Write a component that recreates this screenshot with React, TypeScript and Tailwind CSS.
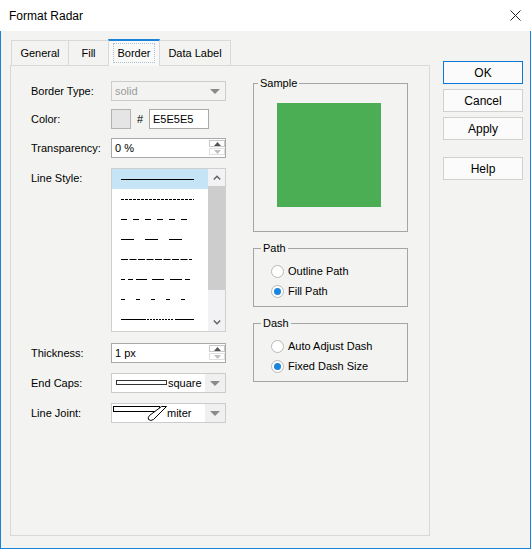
import React from "react";

const FONT = { fontFamily: '"Liberation Sans", Arial, sans-serif' };

function DownTri({ color = "#8a8a8a" }: { color?: string }) {
  return (
    <svg width="10" height="5" viewBox="0 0 10 5">
      <path d="M0 0H10L5 5Z" fill={color} />
    </svg>
  );
}

function Select({ children, disabled }: { children: React.ReactNode; disabled?: boolean }) {
  return (
    <div
      className={
        disabled
          ? "h-[20px] w-[115px] border border-[#cccccc] flex items-center text-[#9a9a9a]"
          : "h-[20px] w-[115px] border border-[#cccccc] bg-white flex items-center"
      }
    >
      <div className="flex-1 flex items-center h-full overflow-hidden">{children}</div>
      <div
        className={
          disabled
            ? "w-[20px] h-full flex items-center justify-center"
            : "w-[20px] h-full flex items-center justify-center bg-[#f0f0f0]"
        }
      >
        <DownTri />
      </div>
    </div>
  );
}

function Spinner() {
  return (
    <div className="flex flex-col w-[16px] gap-[1px] mt-[1px]">
      <div className="h-[7px] border border-[#c8c8c8] flex items-center justify-center">
        <svg width="7" height="4" viewBox="0 0 7 4">
          <path d="M0 4H7L3.5 0Z" fill="#555555" />
        </svg>
      </div>
      <div className="h-[7px] border border-[#e0e0e0] flex items-center justify-center">
        <svg width="7" height="4" viewBox="0 0 7 4">
          <path d="M0 0H7L3.5 4Z" fill="#c0c0c0" />
        </svg>
      </div>
    </div>
  );
}

function SpinInput({ value }: { value: string }) {
  return (
    <div className="h-[20px] w-[115px] border border-[#a9a9a9] bg-white flex items-start">
      <div className="flex-1 pl-[3px] leading-[18px]">{value}</div>
      <Spinner />
    </div>
  );
}

function Row({ label, children }: { label: string; children: React.ReactNode }) {
  return (
    <div className="flex items-center h-[20px]">
      <div className="w-[80px]">{label}</div>
      {children}
    </div>
  );
}

function Radio({ checked, label }: { checked?: boolean; label: string }) {
  return (
    <div className="flex items-center h-[20px]">
      <span className="w-[13px] h-[13px] rounded-full border border-[#b9b9b9] bg-white flex items-center justify-center">
        {checked && <span className="w-[7px] h-[7px] rounded-full bg-[#1a85dc]" />}
      </span>
      <span className="ml-[4px]">{label}</span>
    </div>
  );
}

function dashSegs(pattern: number[], start: number, end: number): [number, number][] {
  const segs: [number, number][] = [];
  let x = start;
  let i = 0;
  while (x < end) {
    const len = pattern[i % pattern.length];
    if (i % 2 === 0) segs.push([x, Math.min(x + len, end)]);
    x += len;
    i++;
  }
  return segs;
}

const lineStyles: [number, number][][] = [
  [[0, 73]],
  dashSegs([3, 1], 0, 73),
  dashSegs([6, 6], 0, 67),
  dashSegs([13, 11], 0, 61),
  dashSegs([7, 1.5], 0, 71),
  [
    [0, 4],
    [7, 12],
    [15, 26],
    [31, 43],
    [49, 61],
    [64, 69],
  ],
  dashSegs([4, 11], 0, 64),
  [[0, 25], ...dashSegs([2, 1], 26, 53), [54, 73]],
];

function LineSample({ segs }: { segs: [number, number][] }) {
  const d = segs.map(([s, e]) => `M${s} 0.5H${e}`).join("");
  return (
    <svg width="74" height="1" viewBox="0 0 74 1" className="block">
      <path d={d} stroke="#000" strokeWidth="1" fill="none" />
    </svg>
  );
}

function LineList() {
  return (
    <div className="w-[115px] h-[164px] border border-[#d0d0d0] bg-white flex">
      <div className="flex-1 flex flex-col">
        {lineStyles.map((segs, i) => (
          <div
            key={i}
            className={
              i === 0
                ? "h-[20px] flex items-center pl-[9px] bg-[#c5e5f6]"
                : "h-[20px] flex items-center pl-[9px]"
            }
          >
            <LineSample segs={segs} />
          </div>
        ))}
      </div>
      <div className="w-[17px] bg-[#f2f1f3] flex flex-col">
        <div className="h-[17px] flex items-center justify-center">
          <svg width="8" height="5" viewBox="0 0 8 5">
            <path d="M0.8 4.5L4 1.2L7.2 4.5" stroke="#606060" strokeWidth="1.4" fill="none" />
          </svg>
        </div>
        <div className="h-[104px] bg-[#cdcdcd]" />
        <div className="flex-1" />
        <div className="h-[17px] flex items-center justify-center">
          <svg width="8" height="5" viewBox="0 0 8 5">
            <path d="M0.8 0.5L4 3.8L7.2 0.5" stroke="#606060" strokeWidth="1.4" fill="none" />
          </svg>
        </div>
      </div>
    </div>
  );
}

function Button({ label, primary }: { label: string; primary?: boolean }) {
  return (
    <div
      className={
        primary
          ? "h-[23px] w-[80px] border border-[#0a78d7] bg-[#fbfbfb] flex items-center justify-center text-[12px]"
          : "h-[23px] w-[80px] border border-[#d0d0d0] bg-[#fbfbfb] flex items-center justify-center text-[12px]"
      }
    >
      {label}
    </div>
  );
}

export default function App() {
  return (
    <div className="w-[531px] h-[549px] flex flex-col bg-[#f3f4f1] text-[11px] text-black" style={FONT}>
      <div className="h-[31px] bg-white flex items-center justify-between pl-[9px] pr-[10px]">
        <span className="text-[12px]">Format Radar</span>
        <svg width="11" height="11" viewBox="0 0 11 11">
          <path d="M0.5 0.5L10.5 10.5M10.5 0.5L0.5 10.5" stroke="#222" strokeWidth="1" />
        </svg>
      </div>
      <div className="flex-1 flex border-x border-b border-[#1883d7]">
        <div className="ml-[9px] mt-[8px] w-[420px] flex flex-col">
          <div className="h-[26px] flex items-end pl-[1px]">
            <div className="h-[25px] w-[57px] border-l border-t border-[#d9d9d9] flex items-center justify-center">
              General
            </div>
            <div className="h-[25px] w-[40px] border-l border-t border-[#d9d9d9] flex items-center justify-center">
              Fill
            </div>
            <div className="relative z-10 h-[27px] w-[52px] -mb-[1px] border-x border-[#d9d9d9] border-t-2 border-t-[#1883d7] bg-[#f9faf8] flex items-start justify-center pt-[2px]">
              <span className="h-[20px] px-[3px] border border-dotted border-[#a9c2da] flex items-center">Border</span>
            </div>
            <div className="h-[25px] w-[71px] border-r border-t border-[#d9d9d9] flex items-center justify-center">
              Data Label
            </div>
          </div>
          <div className="h-[471px] border border-[#d9d9d9] flex">
            <div className="flex flex-col pt-[15px] pl-[20px]">
              <Row label="Border Type:">
                <Select disabled>
                  <span className="pl-[3px]">solid</span>
                </Select>
              </Row>
              <div className="mt-[8px]">
                <Row label="Color:">
                  <div className="w-[20px] h-[20px] border border-[#b3b3b3] bg-[#e5e5e5]" />
                  <span className="w-[18px] text-center">#</span>
                  <div className="w-[60px] h-[20px] border border-[#a9a9a9] bg-white pl-[3px] leading-[18px]">
                    E5E5E5
                  </div>
                </Row>
              </div>
              <div className="mt-[9px]">
                <Row label="Transparency:">
                  <SpinInput value="0 %" />
                </Row>
              </div>
              <div className="mt-[10px] flex items-start">
                <div className="w-[80px] pt-[3px] leading-[14px]">Line Style:</div>
                <LineList />
              </div>
              <div className="mt-[11px]">
                <Row label="Thickness:">
                  <SpinInput value="1 px" />
                </Row>
              </div>
              <div className="mt-[10px]">
                <Row label="End Caps:">
                  <Select>
                    <svg width="55" height="6" viewBox="0 0 55 6" className="ml-[4px] shrink-0">
                      <rect x="0.5" y="0.5" width="50" height="4" fill="white" stroke="#333" strokeWidth="1" />
                    </svg>
                    <span className="-ml-[3px]">square</span>
                  </Select>
                </Row>
              </div>
              <div className="mt-[10px]">
                <Row label="Line Joint:">
                  <Select>
                    <svg width="54" height="18" viewBox="0 0 54 18" className="ml-[1px] shrink-0">
                      <rect x="0.5" y="2.5" width="46" height="5" fill="white" stroke="#000" strokeWidth="1" />
                      <path
                        d="M36.5 11.5L48.5 2.5L53.5 2.5L40.5 15.5Q37.5 17.5 35.5 15.5Q34.5 13.5 36.5 11.5Z"
                        fill="white"
                        stroke="#000"
                        strokeWidth="1"
                      />
                    </svg>
                    <span>miter</span>
                  </Select>
                </Row>
              </div>
            </div>
            <div className="ml-[27px] mt-[9px] w-[155px] flex flex-col">
              <fieldset className="border border-[#a5a5a5]">
                <legend className="ml-[4px] px-[2px] leading-[16px]">Sample</legend>
                <div className="mt-[12px] ml-[23px] mb-[24px] w-[104px] h-[104px] bg-[#4bae55]" />
              </fieldset>
              <fieldset className="mt-[8px] border border-[#a5a5a5] pl-[17px] pb-[5px]">
                <legend className="-ml-[10px] px-[2px] leading-[16px]">Path</legend>
                <div className="mt-[5px] flex flex-col">
                  <Radio label="Outline Path" />
                  <Radio label="Fill Path" checked />
                </div>
              </fieldset>
              <fieldset className="mt-[8px] border border-[#a5a5a5] pl-[17px] pb-[5px]">
                <legend className="-ml-[10px] px-[2px] leading-[16px]">Dash</legend>
                <div className="mt-[5px] flex flex-col">
                  <Radio label="Auto Adjust Dash" />
                  <Radio label="Fixed Dash Size" checked />
                </div>
              </fieldset>
            </div>
          </div>
        </div>
        <div className="ml-[13px] mt-[30px] w-[80px] flex flex-col">
          <Button label="OK" primary />
          <div className="mt-[5px]">
            <Button label="Cancel" />
          </div>
          <div className="mt-[5px]">
            <Button label="Apply" />
          </div>
          <div className="mt-[17px]">
            <Button label="Help" />
          </div>
        </div>
      </div>
    </div>
  );
}
